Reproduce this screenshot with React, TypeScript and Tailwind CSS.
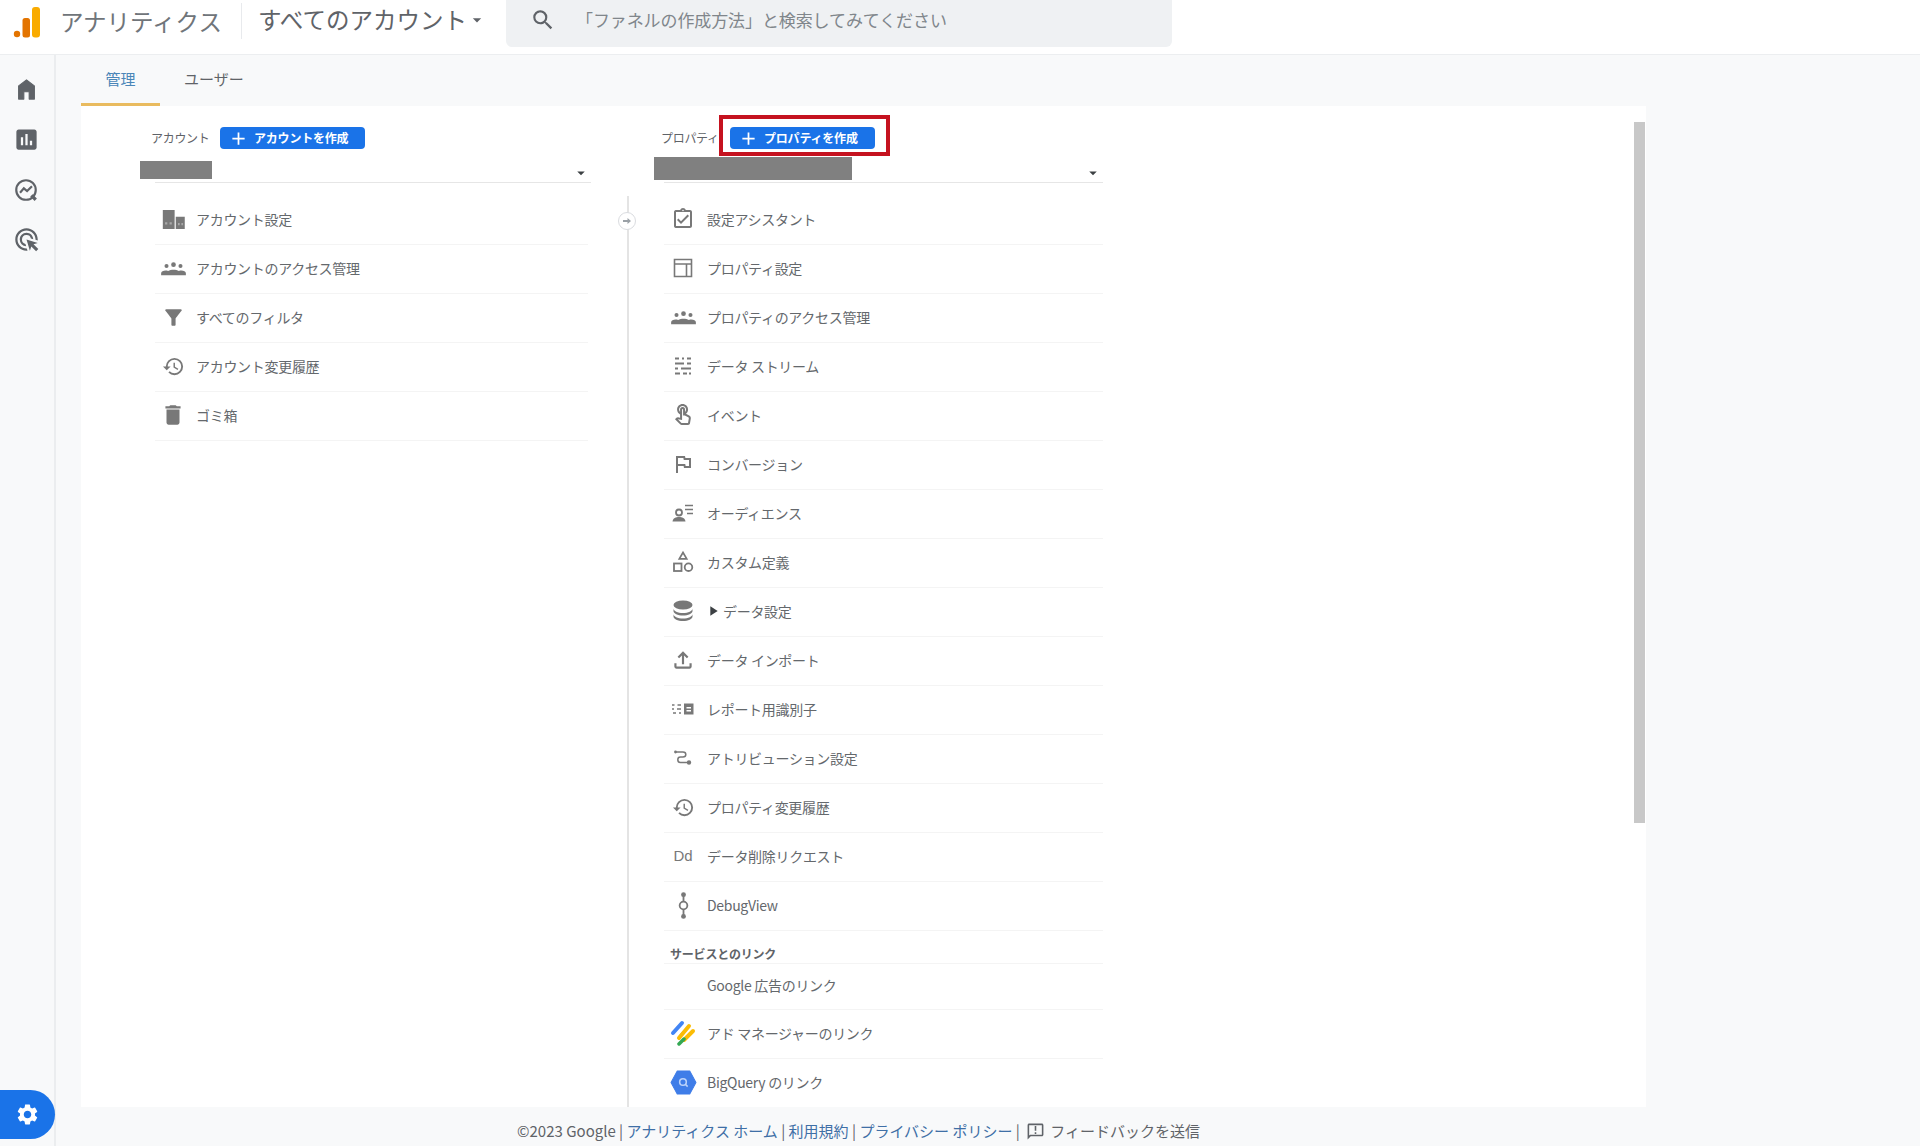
import type { ReactNode } from "react";
import {
  MdAdd,
  MdArrowDropDown,
  MdAssessment,
  MdDelete,
  MdFilterAlt,
  MdHistory,
  MdOutlineAdsClick,
  MdOutlineAnnouncement,
  MdOutlineAssignmentTurnedIn,
  MdOutlineFileUpload,
  MdOutlineFlag,
  MdOutlineTouchApp,
  MdPlayArrow,
  MdSearch,
  MdSettings,
} from "react-icons/md";

const JP = "font-['Noto_Sans_CJK_JP','Noto_Sans',sans-serif]";

function Glyph({ children, size = 24 }: { children: ReactNode; size?: number }) {
  return (
    <svg width={size} height={size} viewBox="0 0 24 24" fill="currentColor" aria-hidden="true">
      {children}
    </svg>
  );
}

function Logo() {
  return (
    <svg width="28" height="32" viewBox="0 0 28 32" aria-hidden="true">
      <circle cx="4" cy="28" r="3.2" fill="#e37400" />
      <rect x="9.5" y="12" width="7.5" height="19.5" rx="2.5" fill="#e37400" />
      <rect x="19" y="1" width="8" height="30.5" rx="3" fill="#f9ab00" />
    </svg>
  );
}

function HomeIcon() {
  return (
    <Glyph size={27}>
      <path d="M12 3.500L5 8.800V20.500h4.600v-6.500h4.800v6.500H19V8.800z" stroke="currentColor" strokeWidth="1" strokeLinejoin="round" />
    </Glyph>
  );
}

function InsightsIcon() {
  return (
    <Glyph size={26}>
      <circle cx="12" cy="12" r="9" fill="none" stroke="currentColor" strokeWidth="2" />
      <path d="M6.500 14.500l3.500-4 3 2.500 4.500-4.500" fill="none" stroke="currentColor" strokeWidth="2" />
      <path d="M17 17l4 4" stroke="currentColor" strokeWidth="3" />
    </Glyph>
  );
}

function DomainIcon() {
  return (
    <Glyph size={27}>
      <path d="M2.500 3.500h10.500v17H2.500zM14 9.500h8v11h-8z" />
      <path d="M4.500 14.500h2v2h-2zM8.500 14.500h2v2h-2zM16 15h1.500v2H16zM19 15h1.500v2H19z" fill="#a8a8a8" />
    </Glyph>
  );
}

function GroupsIcon() {
  return (
    <Glyph size={27}>
      <circle cx="5.800" cy="9.800" r="1.800" />
      <circle cx="12" cy="8.600" r="2.100" />
      <circle cx="18.200" cy="9.800" r="1.800" />
      <path d="M1 18v-1.800c0-1.500 2-2.400 4-2.400.8 0 1.500.1 2.200.4 1.300-.8 3-1.200 4.800-1.200s3.500.4 4.800 1.200c.7-.3 1.400-.4 2.200-.4 2 0 4 .9 4 2.400V18z" />
    </Glyph>
  );
}

function WindowIcon() {
  return (
    <Glyph>
      <path d="M3.500 3.500h17v17h-17zM3.500 8h17M15.500 8v12.500" fill="none" stroke="currentColor" strokeWidth="1.600" />
    </Glyph>
  );
}

function StreamIcon() {
  return (
    <Glyph>
      <path d="M4 4.500h4M11 4.500h2M16 4.500h4M4 9.500h9M16 9.500h4M4 14.500h3M10 14.500h10M4 19.500h5M12 19.500h4M18 19.500h2" stroke="currentColor" strokeWidth="2.200" />
    </Glyph>
  );
}

function AudienceIcon() {
  return (
    <Glyph>
      <circle cx="8" cy="11.500" r="3" fill="none" stroke="currentColor" strokeWidth="1.800" />
      <path d="M1.500 20.500c.5-3.600 3.400-4.500 6.500-4.500s6 .9 6.500 4.500z" />
      <path d="M14 4.500h8M14 8.500h8M16 12.500h6" stroke="currentColor" strokeWidth="1.500" />
    </Glyph>
  );
}

function ShapesIcon() {
  return (
    <Glyph>
      <path d="M12 2.500l3.700 6.300H8.300z" fill="none" stroke="currentColor" strokeWidth="1.700" />
      <rect x="3" y="13.500" width="7.500" height="7.500" fill="none" stroke="currentColor" strokeWidth="1.800" />
      <circle cx="17.500" cy="17.200" r="3.800" fill="none" stroke="currentColor" strokeWidth="1.800" />
    </Glyph>
  );
}

function StackIcon() {
  return (
    <Glyph>
      <ellipse cx="12" cy="6" rx="9.500" ry="4.500" />
      <path d="M2.500 9.500c0 2.600 4.200 4.500 9.500 4.500s9.500-1.900 9.500-4.500v2.500c0 2.600-4.200 4.500-9.500 4.500s-9.500-1.900-9.500-4.500z" />
      <path d="M2.500 15c0 2.600 4.200 4.500 9.500 4.500s9.500-1.900 9.500-4.500v2.500c0 2.600-4.200 4.500-9.500 4.500s-9.500-1.900-9.500-4.500z" />
    </Glyph>
  );
}

function IdentityIcon() {
  return (
    <Glyph>
      <path d="M1 8h2.500M6.500 8H10M1 12h2M6 12h4M2 16h3M8 16h2" stroke="currentColor" strokeWidth="1.400" />
      <path d="M13 6.500h9.500v11H13z" />
      <path d="M15.500 10h4.500v1.600h-4.500zM15.500 13h4.500v1.600h-4.500z" fill="#fff" />
    </Glyph>
  );
}

function AttributionIcon() {
  return (
    <Glyph>
      <path d="M5 6h7c1.800 0 2.800 1 2.800 2.500S13.800 11 12 11H9.500c-1.700 0-2.700 1.100-2.700 2.700s1 2.800 2.700 2.800H17" fill="none" stroke="currentColor" strokeWidth="1.500" />
      <circle cx="4.500" cy="6" r="1.400" />
      <circle cx="18" cy="16.500" r="2.200" />
    </Glyph>
  );
}

function DebugIcon() {
  return (
    <Glyph size={29}>
      <circle cx="12" cy="3" r="2" />
      <circle cx="12" cy="21" r="2" />
      <circle cx="12" cy="12" r="3.200" fill="none" stroke="currentColor" strokeWidth="1.500" />
      <path d="M12 4v4.800M12 15.200V20" stroke="currentColor" strokeWidth="1.500" />
    </Glyph>
  );
}

function AdManagerIcon() {
  return (
    <svg width="26" height="26" viewBox="0 0 26 26" aria-hidden="true">
      <path d="M3 13L12 3" stroke="#4285f4" strokeWidth="4" strokeLinecap="round" />
      <path d="M8 17L18 6" stroke="#4285f4" strokeWidth="1" strokeLinecap="round" />
      <path d="M9 18L19 6" stroke="#fbbc04" strokeWidth="4" strokeLinecap="round" />
      <path d="M14 20L23 11" stroke="#fbbc04" strokeWidth="4" strokeLinecap="round" />
      <path d="M9 24l5-5" stroke="#34a853" strokeWidth="3.500" strokeLinecap="round" />
    </svg>
  );
}

function BigQueryIcon() {
  return (
    <svg width="27" height="27" viewBox="0 0 26 26" aria-hidden="true">
      <path d="M7 2h12l6 11-6 11H7L1 13z" fill="#3f7de8" strokeLinejoin="round" stroke="#3f7de8" strokeWidth="1" />
      <circle cx="12.500" cy="12.500" r="3.200" fill="none" stroke="#bcd3fa" strokeWidth="1.500" />
      <path d="M14.500 14.500l2.500 2.500" stroke="#bcd3fa" strokeWidth="1.500" />
    </svg>
  );
}

type Item = { icon: ReactNode; label: string; caret?: boolean };

const accountItems: Item[] = [
  { icon: <DomainIcon />, label: "アカウント設定" },
  { icon: <GroupsIcon />, label: "アカウントのアクセス管理" },
  { icon: <MdFilterAlt size={25} />, label: "すべてのフィルタ" },
  { icon: <MdHistory size={23} />, label: "アカウント変更履歴" },
  { icon: <MdDelete size={26} />, label: "ゴミ箱" },
];

const propertyItems: Item[] = [
  { icon: <MdOutlineAssignmentTurnedIn size={24} />, label: "設定アシスタント" },
  { icon: <WindowIcon />, label: "プロパティ設定" },
  { icon: <GroupsIcon />, label: "プロパティのアクセス管理" },
  { icon: <StreamIcon />, label: "データ ストリーム" },
  { icon: <MdOutlineTouchApp size={24} />, label: "イベント" },
  { icon: <MdOutlineFlag size={24} />, label: "コンバージョン" },
  { icon: <AudienceIcon />, label: "オーディエンス" },
  { icon: <ShapesIcon />, label: "カスタム定義" },
  { icon: <StackIcon />, label: "データ設定", caret: true },
  { icon: <MdOutlineFileUpload size={26} />, label: "データ インポート" },
  { icon: <IdentityIcon />, label: "レポート用識別子" },
  { icon: <AttributionIcon />, label: "アトリビューション設定" },
  { icon: <MdHistory size={23} />, label: "プロパティ変更履歴" },
  { icon: <span className="text-[15px] font-['Liberation_Sans',sans-serif]">Dd</span>, label: "データ削除リクエスト" },
  { icon: <DebugIcon />, label: "DebugView" },
];

function Row({ item, iconWidth, className = "h-[49px] pb-[2px]" }: { item: Item; iconWidth: string; className?: string }) {
  return (
    <div className={`flex items-center border-b border-[#f4f4f4] text-[#64686c] ${className}`}>
      <div className={`flex items-center justify-center shrink-0 text-[#787878] ${iconWidth}`}>{item.icon}</div>
      <div className="flex items-center ml-[5px] text-[14px] tracking-[-0.3px]">
        {item.caret && <MdPlayArrow size={16} className="text-[#3c4043] mr-[2px] -ml-[2px]" />}
        {item.label}
      </div>
    </div>
  );
}

function CreateButton({ label }: { label: string }) {
  return (
    <button
      type="button"
      className="flex items-center h-[22px] w-[145px] rounded-[4px] bg-[#1a73e8] text-white text-[12px] font-bold tracking-[-0.2px] pl-[8px]"
    >
      <MdAdd size={21} className="shrink-0 mr-[5px]" />
      {label}
    </button>
  );
}

export default function App() {
  return (
    <div className={`w-[1920px] h-[1146px] overflow-hidden bg-[#f8f9fa] flex flex-col ${JP}`}>
      <header className="h-[55px] shrink-0 bg-white border-b border-[#eceef0] flex items-start">
        <div className="w-[60px] pl-[13px] pt-[6px] shrink-0">
          <Logo />
        </div>
        <div className="w-[181px] shrink-0 text-[23.500px] text-[#70757a] leading-[42px]">アナリティクス</div>
        <div className="w-px h-[36px] mt-[3px] bg-[#e8eaed] shrink-0" />
        <div className="w-[264px] shrink-0 pl-[16px] flex items-center text-[23.500px] text-[#5f6368] leading-[39px]">
          すべてのアカウント
          <MdArrowDropDown size={20} />
        </div>
        <div className="w-[666px] h-[47px] bg-[#eff1f3] rounded-b-[6px] flex items-center pb-[7px] shrink-0">
          <MdSearch size={26} className="ml-[24px] text-[#5f6368]" />
          <span className="ml-[20px] text-[17px] text-[#80868b] -tracking-[0.100px] -mt-[1px]">「ファネルの作成方法」と検索してみてください</span>
        </div>
      </header>

      <div className="flex-1 flex min-h-0">
        <nav className="w-[56px] shrink-0 border-r-2 border-[#ebedef] flex flex-col items-center pt-[21px] text-[#5f6368]">
          <div className="h-[50px] w-full flex justify-center pr-[2px]"><HomeIcon /></div>
          <div className="h-[51px] w-full flex justify-center pr-[2px]"><MdAssessment size={27} /></div>
          <div className="h-[49px] w-full flex justify-center pr-[2px]"><InsightsIcon /></div>
          <div className="h-[50px] w-full flex justify-center pr-[2px]"><MdOutlineAdsClick size={27} /></div>
          <div className="mt-auto mb-[7px] self-start w-[55px] h-[49px] bg-[#1a73e8] rounded-r-[25px] flex items-center justify-center text-white">
            <MdSettings size={25} />
          </div>
        </nav>

        <main className="flex-1 pl-[25px] flex flex-col min-w-0">
          <div className="h-[51px] shrink-0 flex text-[15px]">
            <div className="w-[79px] h-[51px] border-b-[3px] border-[#e9bb5f] flex items-center justify-center text-[#4a86b8]">管理</div>
            <div className="ml-[24px] flex items-center text-[#5f6368] pb-[3px]">ユーザー</div>
          </div>

          <div className="w-[1565px] h-[1001px] shrink-0 bg-white flex overflow-hidden">
            <section className="w-[510px] pl-[74px] pt-[21px] shrink-0">
              <div className="flex items-center h-[22px] -ml-[4px] text-[12px] text-[#5f6368] tracking-[-0.300px]">
                <span className="w-[69px]">アカウント</span>
                <CreateButton label="アカウントを作成" />
              </div>
              <div className="h-[34px] border-b border-[#e6e6e6] flex items-start justify-between">
                <div className="w-[72px] h-[18px] mt-[12px] -ml-[15px] bg-[#808080]" />
                <MdArrowDropDown size={18} className="mt-[15px] mr-[1px] text-[#3c4043]" />
              </div>
              <div className="mt-[13px] mr-[3px]">
                {accountItems.map((item) => (
                  <Row key={item.label} item={item} iconWidth="w-[36px]" />
                ))}
              </div>
            </section>

            <div className="w-[73px] shrink-0 flex justify-center pt-[90px]">
              <div className="relative w-[2px] h-full bg-[#e4e4e4]">
                <div className="absolute left-[-9px] top-[16px] w-[18px] h-[18px] rounded-full bg-white border border-[#dadce0] flex items-center justify-center text-[#9aa0a6]">
                  <svg width="10" height="10" viewBox="0 0 10 10" aria-hidden="true">
                    <path d="M1 4h4.500V2L9 5 5.500 8V6H1z" fill="currentColor" />
                  </svg>
                </div>
              </div>
            </div>

            <section className="w-[439px] pt-[21px] shrink-0">
              <div className="flex items-center h-[22px] -ml-[3px] text-[12px] text-[#5f6368] tracking-[-0.300px]">
                <span className="w-[69px]">プロパティ</span>
                <div className="relative">
                  <CreateButton label="プロパティを作成" />
                  <div className="absolute -left-[11px] -top-[12px] w-[171px] h-[41px] border-[4px] border-[#c5121f]" />
                </div>
              </div>
              <div className="h-[34px] border-b border-[#e6e6e6] flex items-start justify-between">
                <div className="w-[198px] h-[23px] mt-[8px] -ml-[10px] bg-[#808080]" />
                <MdArrowDropDown size={18} className="mt-[15px] mr-[1px] text-[#3c4043]" />
              </div>
              <div className="mt-[13px]">
                {propertyItems.map((item) => (
                  <Row key={item.label} item={item} iconWidth="w-[38px]" />
                ))}
                <div className="h-[33px] border-b border-[#f4f4f4] pt-[14px] pl-[6px] text-[12px] font-semibold text-[#5f6368] leading-[18px] tracking-[-0.200px]">
                  サービスとのリンク
                </div>
                <Row item={{ icon: null, label: "Google 広告のリンク" }} iconWidth="w-[38px]" className="h-[46px] pb-[3px]" />
                <Row item={{ icon: <AdManagerIcon />, label: "アド マネージャーのリンク" }} iconWidth="w-[38px]" />
                <Row item={{ icon: <BigQueryIcon />, label: "BigQuery のリンク" }} iconWidth="w-[38px]" />
              </div>
            </section>

            <div className="flex-1" />
            <div className="w-[11px] mr-px pt-[16px] shrink-0">
              <div className="h-[701px] bg-[#c8c8c8]" />
            </div>
          </div>

          <footer className="w-[1565px] flex-1 flex items-center justify-center text-[15px] text-[#5f6368] pr-[10px] pt-[9px]">
            <span>©2023 Google |&nbsp;</span>
            <span className="text-[#3f6fa6]">アナリティクス ホーム</span>
            <span>&nbsp;|&nbsp;</span>
            <span className="text-[#3f6fa6]">利用規約</span>
            <span>&nbsp;|&nbsp;</span>
            <span className="text-[#3f6fa6]">プライバシー ポリシー</span>
            <span>&nbsp;|&nbsp;</span>
            <MdOutlineAnnouncement size={19} className="mx-[3px]" />
            <span className="ml-[2px]">フィードバックを送信</span>
          </footer>
        </main>
      </div>
    </div>
  );
}
